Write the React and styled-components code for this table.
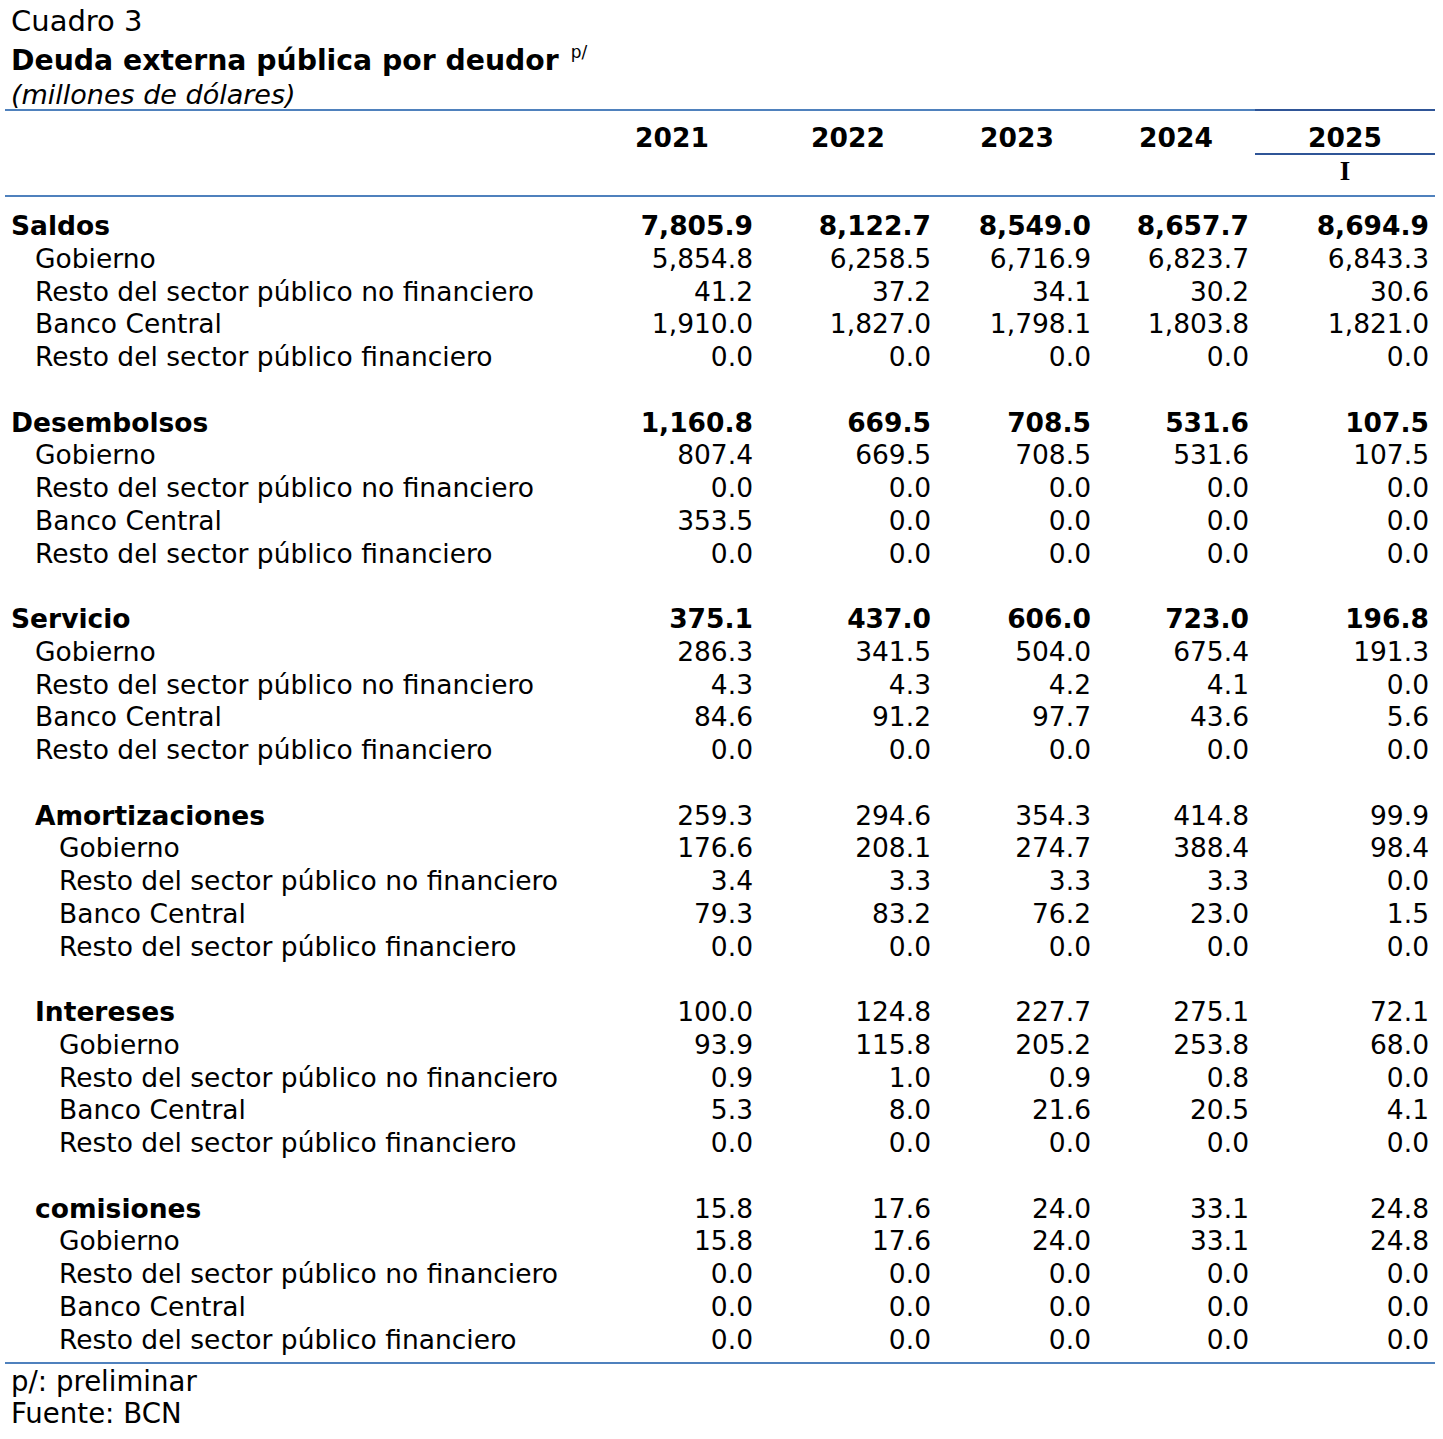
import React from "react";
import styled, { createGlobalStyle } from "styled-components";

const Global = createGlobalStyle`
  html, body { margin: 0; padding: 0; background: #fff; }
  body { font-family: "DejaVu Sans", Verdana, sans-serif; color: #000; }
`;

const BLUE = "#4f81bd";
const DARK = "#2f5597";

const Page = styled.div`
  width: 1430px;
  padding: 5px 0 0 5px;
  font-size: 26.5px;
`;

const Caption = styled.div`
  padding-left: 6px;
  line-height: 33px;
  font-size: 29px;
`;

const Title = styled.div`
  font-weight: bold;
  font-size: 28.3px;
  margin-top: 6px;
  line-height: 33px;
`;

const Sup = styled.sup`
  font-weight: normal;
  font-size: 17px;
  vertical-align: top;
  position: relative;
  top: -8px;
  margin-left: 12px;
`;

const Subtitle = styled.div`
  font-style: italic;
  font-size: 27px;
  line-height: 33px;
  margin-top: 1px;
`;

const Table = styled.div`
  margin-top: -2px;
  border-top: 2px solid ${BLUE};
  border-bottom: 2px solid ${BLUE};
`;

const cols = "580px 174px 178px 160px 158px 180px";

const Head = styled.div`
  display: grid;
  grid-template-columns: ${cols};
  border-bottom: 2px solid ${BLUE};
  height: 84px;
`;

const Year = styled.div`
  font-weight: bold;
  text-align: center;
  padding-top: 10px;
  line-height: 33px;
`;

const LastYear = styled.div`
  display: flex;
  flex-direction: column;
  margin-top: -2px;
  border-top: 2px solid ${DARK};
`;

const LastYearTop = styled.div`
  font-weight: bold;
  text-align: center;
  padding-top: 11px;
  line-height: 31px;
  border-bottom: 2px solid ${DARK};
`;

const Quarter = styled.div`
  font-weight: bold;
  text-align: center;
  line-height: 33px;
  font-family: "Liberation Serif", serif;
  font-size: 27px;
`;

const Body = styled.div`
  padding: 12px 0 7px;
`;

const Row = styled.div`
  display: grid;
  grid-template-columns: ${cols};
  height: 32.75px;
  line-height: 33px;
  font-weight: ${(p) => (p.$bold ? "bold" : "normal")};
`;

const Label = styled.div`
  padding-left: ${(p) => 6 + p.$level * 24}px;
  white-space: nowrap;
  font-weight: ${(p) => (p.$bold ? "bold" : "normal")};
`;

const Num = styled.div`
  text-align: right;
  padding-right: 6px;
  white-space: nowrap;
`;

const Notes = styled.div`
  padding-left: 6px;
  font-size: 27.6px;
  line-height: 32px;
  padding-top: 2px;
`;

const subs = [
  "Gobierno",
  "Resto del sector público no financiero",
  "Banco Central",
  "Resto del sector público financiero",
];

const groups = [
  {
    name: "Saldos",
    level: 0,
    boldNums: true,
    total: ["7,805.9", "8,122.7", "8,549.0", "8,657.7", "8,694.9"],
    rows: [
      ["5,854.8", "6,258.5", "6,716.9", "6,823.7", "6,843.3"],
      ["41.2", "37.2", "34.1", "30.2", "30.6"],
      ["1,910.0", "1,827.0", "1,798.1", "1,803.8", "1,821.0"],
      ["0.0", "0.0", "0.0", "0.0", "0.0"],
    ],
  },
  {
    name: "Desembolsos",
    level: 0,
    boldNums: true,
    total: ["1,160.8", "669.5", "708.5", "531.6", "107.5"],
    rows: [
      ["807.4", "669.5", "708.5", "531.6", "107.5"],
      ["0.0", "0.0", "0.0", "0.0", "0.0"],
      ["353.5", "0.0", "0.0", "0.0", "0.0"],
      ["0.0", "0.0", "0.0", "0.0", "0.0"],
    ],
  },
  {
    name: "Servicio",
    level: 0,
    boldNums: true,
    total: ["375.1", "437.0", "606.0", "723.0", "196.8"],
    rows: [
      ["286.3", "341.5", "504.0", "675.4", "191.3"],
      ["4.3", "4.3", "4.2", "4.1", "0.0"],
      ["84.6", "91.2", "97.7", "43.6", "5.6"],
      ["0.0", "0.0", "0.0", "0.0", "0.0"],
    ],
  },
  {
    name: "Amortizaciones",
    level: 1,
    boldNums: false,
    total: ["259.3", "294.6", "354.3", "414.8", "99.9"],
    rows: [
      ["176.6", "208.1", "274.7", "388.4", "98.4"],
      ["3.4", "3.3", "3.3", "3.3", "0.0"],
      ["79.3", "83.2", "76.2", "23.0", "1.5"],
      ["0.0", "0.0", "0.0", "0.0", "0.0"],
    ],
  },
  {
    name: "Intereses",
    level: 1,
    boldNums: false,
    total: ["100.0", "124.8", "227.7", "275.1", "72.1"],
    rows: [
      ["93.9", "115.8", "205.2", "253.8", "68.0"],
      ["0.9", "1.0", "0.9", "0.8", "0.0"],
      ["5.3", "8.0", "21.6", "20.5", "4.1"],
      ["0.0", "0.0", "0.0", "0.0", "0.0"],
    ],
  },
  {
    name: "comisiones",
    level: 1,
    boldNums: false,
    total: ["15.8", "17.6", "24.0", "33.1", "24.8"],
    rows: [
      ["15.8", "17.6", "24.0", "33.1", "24.8"],
      ["0.0", "0.0", "0.0", "0.0", "0.0"],
      ["0.0", "0.0", "0.0", "0.0", "0.0"],
      ["0.0", "0.0", "0.0", "0.0", "0.0"],
    ],
  },
];

export default function App() {
  return (
    <Page>
      <Global />
      <Caption>
        Cuadro 3
        <Title>
          Deuda externa pública por deudor<Sup>p/</Sup>
        </Title>
        <Subtitle>(millones de dólares)</Subtitle>
      </Caption>
      <Table>
        <Head>
          <div />
          <Year>2021</Year>
          <Year>2022</Year>
          <Year>2023</Year>
          <Year>2024</Year>
          <LastYear>
            <LastYearTop>2025</LastYearTop>
            <Quarter>I</Quarter>
          </LastYear>
        </Head>
        <Body>
          {groups.map((g, gi) => (
            <React.Fragment key={g.name}>
              {gi > 0 && <Row />}
              <Row $bold={g.boldNums}>
                <Label $level={g.level} $bold>
                  {g.name}
                </Label>
                {g.total.map((v, i) => (
                  <Num key={i}>{v}</Num>
                ))}
              </Row>
              {g.rows.map((r, ri) => (
                <Row key={ri}>
                  <Label $level={g.level + 1}>{subs[ri]}</Label>
                  {r.map((v, i) => (
                    <Num key={i}>{v}</Num>
                  ))}
                </Row>
              ))}
            </React.Fragment>
          ))}
        </Body>
      </Table>
      <Notes>
        p/: preliminar
        <br />
        Fuente: BCN
      </Notes>
    </Page>
  );
}
